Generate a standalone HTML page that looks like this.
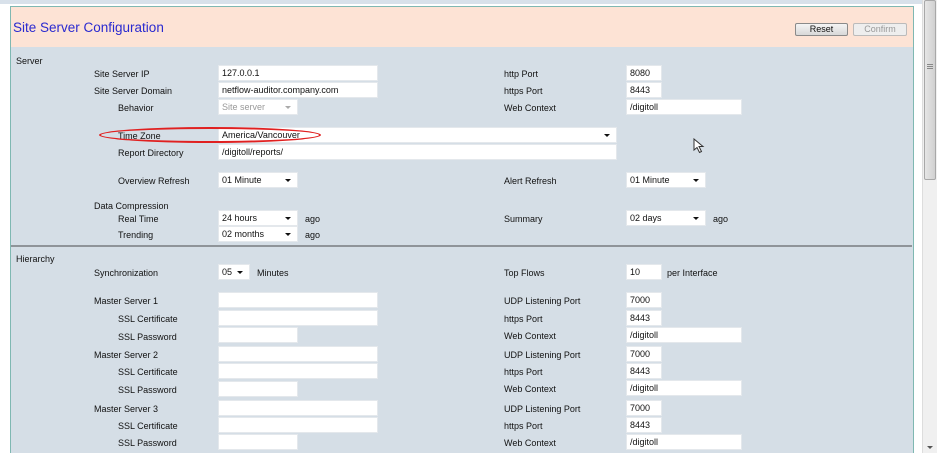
<!DOCTYPE html>
<html><head><style>
*{margin:0;padding:0;box-sizing:border-box}
html,body{width:937px;height:453px;overflow:hidden}
body{background:#fff;font-family:"Liberation Sans",Tahoma,sans-serif;font-size:9px;color:#111;position:relative}
div,span{position:absolute}
.top{left:0;top:0;width:922px;height:4px;background:#d8e1ea}
.panel{left:10px;top:6px;width:904px;height:447px;border:1px solid #7fb8b2;border-bottom:none;background:#d5dee6}
.hdr{left:11px;top:7px;width:902px;height:40px;background:#fde3d5}
.title{left:13px;top:20px;font-size:13.5px;color:#2a2ad0}
.btn{height:13px;top:23px;border:1px solid #8a8a8a;border-radius:2px;background:linear-gradient(#f4f4f4,#d8d8d8);text-align:center;line-height:11px;font-size:9px}
.l{line-height:12px;white-space:nowrap}
.i{height:16px;background:#fff;border:1px solid #e4e8ec;line-height:14px;padding-left:3px;white-space:nowrap}
.s::after{content:"";position:absolute;right:6px;top:6px;border-left:3px solid transparent;border-right:3px solid transparent;border-top:3px solid #111}
.d{color:#999}.d::after{border-top-color:#aaa}
.sep{left:11px;top:245px;width:901px;height:2px;background:#8f9499}
.sb{left:922px;top:0;width:15px;height:453px;background:#f0f0f0;border-left:1px solid #ddd}
.th{left:924px;top:0;width:12px;height:180px;background:linear-gradient(90deg,#e6e6e6,#d0d0d0);border:1px solid #a8a8a8;border-radius:2px}
.ell{left:99px;top:127px;width:222px;height:16px;border:2px solid #e02020;border-radius:50%}
</style></head><body>
<div class="top"></div>
<div class="panel"></div>
<div class="hdr"></div>
<div class="title">Site Server Configuration</div>
<div class="btn" style="left:795px;width:53px">Reset</div>
<div class="btn" style="left:853px;width:54px;color:#999;border-color:#bbb;background:#eee">Confirm</div>
<div class="sb"></div><div class="th"></div>
<div style="left:927px;top:64px;width:6px;height:5px;border-top:1px solid #888;border-bottom:1px solid #888"></div>
<div style="left:927px;top:66px;width:6px;height:1px;background:#888"></div>
<div style="left:927px;top:446px;border-left:3px solid transparent;border-right:3px solid transparent;border-top:3px solid #555"></div>

<div class="l" style="left:16px;top:55px">Server</div>
<div class="l" style="left:94px;top:68px">Site Server IP</div><div class="i" style="left:218px;top:65px;width:160px">127.0.0.1</div>
<div class="l" style="left:94px;top:85px">Site Server Domain</div><div class="i" style="left:218px;top:82px;width:160px">netflow-auditor.company.com</div>
<div class="l" style="left:118px;top:102px">Behavior</div><div class="i s d" style="left:218px;top:99px;width:80px">Site server</div>
<div class="l" style="left:504px;top:68px">http Port</div><div class="i" style="left:626px;top:65px;width:36px">8080</div>
<div class="l" style="left:504px;top:85px">https Port</div><div class="i" style="left:626px;top:82px;width:36px">8443</div>
<div class="l" style="left:504px;top:102px">Web Context</div><div class="i" style="left:626px;top:99px;width:116px">/digitoll</div>

<div class="l" style="left:118px;top:130px">Time Zone</div><div class="i s" style="left:218px;top:127px;width:399px">America/Vancouver</div>
<div class="ell"></div>
<div class="l" style="left:118px;top:147px">Report Directory</div><div class="i" style="left:218px;top:144px;width:399px">/digitoll/reports/</div>
<svg style="position:absolute;left:693px;top:138px" width="12" height="16"><path d="M1 1 L1 12 L4 9.5 L6.5 14.5 L8.5 13.5 L6 8.5 L10 8.5 Z" fill="#fff" stroke="#333" stroke-width="1"/></svg>

<div class="l" style="left:118px;top:175px">Overview Refresh</div><div class="i s" style="left:218px;top:172px;width:80px">01 Minute</div>
<div class="l" style="left:504px;top:175px">Alert Refresh</div><div class="i s" style="left:626px;top:172px;width:80px">01 Minute</div>
<div class="l" style="left:94px;top:200px">Data Compression</div>
<div class="l" style="left:118px;top:213px">Real Time</div><div class="i s" style="left:218px;top:210px;width:80px">24 hours</div><div class="l" style="left:305px;top:213px">ago</div>
<div class="l" style="left:118px;top:229px">Trending</div><div class="i s" style="left:218px;top:226px;width:80px">02 months</div><div class="l" style="left:305px;top:229px">ago</div>
<div class="l" style="left:504px;top:213px">Summary</div><div class="i s" style="left:626px;top:210px;width:80px">02 days</div><div class="l" style="left:713px;top:213px">ago</div>
<div class="sep"></div>

<div class="l" style="left:16px;top:253px">Hierarchy</div>
<div class="l" style="left:94px;top:267px">Synchronization</div><div class="i s" style="left:218px;top:264px;width:32px">05</div><div class="l" style="left:257px;top:267px">Minutes</div>
<div class="l" style="left:504px;top:267px">Top Flows</div><div class="i" style="left:626px;top:264px;width:36px">10</div><div class="l" style="left:667px;top:267px">per Interface</div>

<div class="l" style="left:94px;top:295px">Master Server 1</div><div class="i" style="left:218px;top:292px;width:160px"></div>
<div class="l" style="left:118px;top:313px">SSL Certificate</div><div class="i" style="left:218px;top:310px;width:160px"></div>
<div class="l" style="left:118px;top:331px">SSL Password</div><div class="i" style="left:218px;top:327px;width:80px"></div>
<div class="l" style="left:504px;top:295px">UDP Listening Port</div><div class="i" style="left:626px;top:292px;width:36px">7000</div>
<div class="l" style="left:504px;top:313px">https Port</div><div class="i" style="left:626px;top:310px;width:36px">8443</div>
<div class="l" style="left:504px;top:330px">Web Context</div><div class="i" style="left:626px;top:327px;width:116px">/digitoll</div>

<div class="l" style="left:94px;top:349px">Master Server 2</div><div class="i" style="left:218px;top:346px;width:160px"></div>
<div class="l" style="left:118px;top:366px">SSL Certificate</div><div class="i" style="left:218px;top:363px;width:160px"></div>
<div class="l" style="left:118px;top:384px">SSL Password</div><div class="i" style="left:218px;top:381px;width:80px"></div>
<div class="l" style="left:504px;top:349px">UDP Listening Port</div><div class="i" style="left:626px;top:346px;width:36px">7000</div>
<div class="l" style="left:504px;top:366px">https Port</div><div class="i" style="left:626px;top:363px;width:36px">8443</div>
<div class="l" style="left:504px;top:383px">Web Context</div><div class="i" style="left:626px;top:380px;width:116px">/digitoll</div>

<div class="l" style="left:94px;top:403px">Master Server 3</div><div class="i" style="left:218px;top:400px;width:160px"></div>
<div class="l" style="left:118px;top:420px">SSL Certificate</div><div class="i" style="left:218px;top:417px;width:160px"></div>
<div class="l" style="left:118px;top:437px">SSL Password</div><div class="i" style="left:218px;top:434px;width:80px"></div>
<div class="l" style="left:504px;top:403px">UDP Listening Port</div><div class="i" style="left:626px;top:400px;width:36px">7000</div>
<div class="l" style="left:504px;top:420px">https Port</div><div class="i" style="left:626px;top:417px;width:36px">8443</div>
<div class="l" style="left:504px;top:437px">Web Context</div><div class="i" style="left:626px;top:434px;width:116px">/digitoll</div>
</body></html>
